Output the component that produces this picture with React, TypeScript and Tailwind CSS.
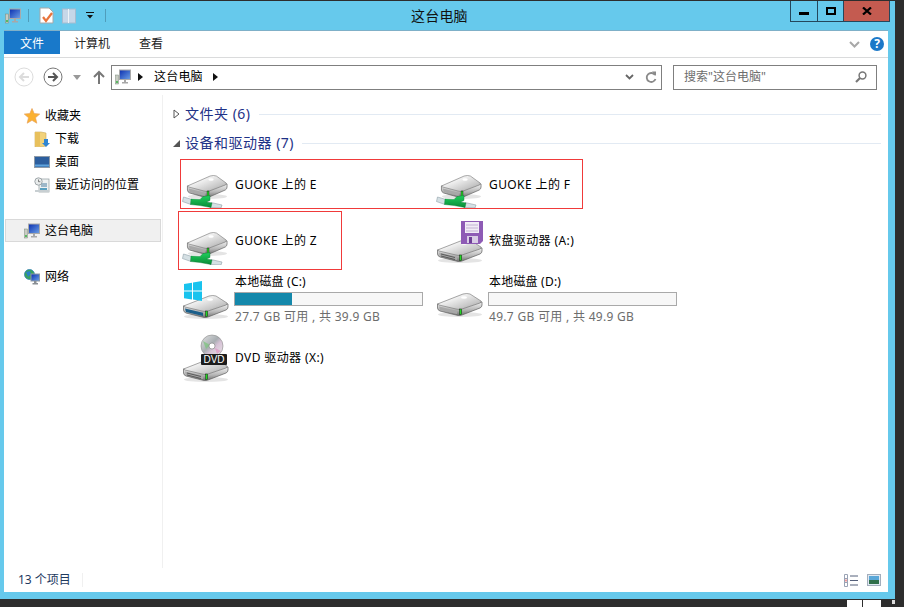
import React from "react";

type DriveProps = { x: number; y: number; front?: string; slots?: boolean };

const Defs = () => (
  <svg width="0" height="0" className="absolute">
    <defs>
      <linearGradient id="topFace" x1="0" y1="0" x2="1" y2="1">
        <stop offset="0" stopColor="#b0b0b0" />
        <stop offset="0.35" stopColor="#f0f0f0" />
        <stop offset="0.7" stopColor="#c8c8c8" />
        <stop offset="1" stopColor="#9a9a9a" />
      </linearGradient>
      <linearGradient id="sideFace" x1="0" y1="0" x2="0" y2="1">
        <stop offset="0" stopColor="#f2f2f2" />
        <stop offset="0.6" stopColor="#b4b4b4" />
        <stop offset="1" stopColor="#707070" />
      </linearGradient>
      <linearGradient id="pipe" x1="0" y1="0" x2="0" y2="1">
        <stop offset="0" stopColor="#1fd05c" />
        <stop offset="1" stopColor="#0a8a38" />
      </linearGradient>
      <linearGradient id="screen" x1="0" y1="0" x2="1" y2="1">
        <stop offset="0" stopColor="#0a2fb0" />
        <stop offset="1" stopColor="#6ea2e6" />
      </linearGradient>
      <linearGradient id="disc" x1="0" y1="0" x2="1" y2="1">
        <stop offset="0" stopColor="#e4e4e4" />
        <stop offset="0.45" stopColor="#a8aeb2" />
        <stop offset="0.6" stopColor="#d7c2d6" />
        <stop offset="1" stopColor="#e9e9e9" />
      </linearGradient>
    </defs>
  </svg>
);

// isometric box shared by every drive icon
const DriveBody = ({ x, y, front = "#a8a8a8", slots }: DriveProps) => (
  <g transform={`translate(${x} ${y})`}>
    <ellipse cx="23" cy="21.5" rx="22" ry="2.5" fill="#d8d8d8" opacity="0.7" />
    <path d="M0.5 11 L0.5 15 Q0.5 17 3 18 L19 22 Q22 23 25 22 L43 15 Q45 14 45 12 L45 9 L22 12 Z" fill="url(#sideFace)" stroke="#5e5e5e" strokeWidth="0.7" />
    <path d="M0.5 11 L26 1 Q30 0 33 1 L44 8 Q45 9 43 10 L25 16 Q22 17 19 16 L2 12 Z" fill="url(#topFace)" stroke="#6e6e6e" strokeWidth="0.6" />
    <path d="M2 13.5 L20 17.8 L20 21 L3 17 Z" fill={front} />
    {slots && <path d="M4 15 L18 18.5 M4 17 L18 20.5" stroke="#444" strokeWidth="0.8" />}
    <ellipse cx="27" cy="4.5" rx="3" ry="1.3" fill="#fff" />
    <rect x="22.5" y="16" width="2.2" height="5.5" fill="#22d822" stroke="#1c1c1c" strokeWidth="0.5" />
  </g>
);

const NetworkDrive = () => (
  <svg width="48" height="48" viewBox="0 0 48 48" className="shrink-0">
    <g transform="translate(5 15) scale(0.89 1)">
      <DriveBody x={0} y={0} />
    </g>
    <path d="M1.5 37 L10 39.5 L9 44.5 L0.5 41.5 Z" fill="#d5e0e4" stroke="#8fa0a8" strokeWidth="0.6" />
    <path d="M29 42.5 L40 45 L39 48 L28 47.5 Z" fill="#d5e0e4" stroke="#8fa0a8" strokeWidth="0.6" />
    <path d="M9 39 L18 39.5 L21 36.5 L28 35.5 L28 40.5 L24.5 42 L30 43 L29 47.5 L18 45.5 L8.5 44.5 Z" fill="url(#pipe)" stroke="#0b7a32" strokeWidth="0.4" />
  </svg>
);

const FloppyDrive = () => (
  <svg width="48" height="48" viewBox="0 0 48 48" className="shrink-0">
    <DriveBody x={1} y={22} slots />
    <path d="M25 4 H47 V24 L44 27 H25 Z" fill="#8e5bb5" />
    <rect x="29" y="5" width="14" height="11" fill="#f1ecf6" />
    <path d="M30 8 H42 M30 11 H42 M30 14 H42" stroke="#b9a5cc" strokeWidth="0.8" />
    <rect x="31" y="19" width="11" height="7" fill="#d9cce6" />
    <rect x="33" y="20" width="3" height="6" fill="#6d3f96" />
  </svg>
);

const SystemDrive = () => (
  <svg width="48" height="48" viewBox="0 0 48 48" className="shrink-0">
    <DriveBody x={1} y={19} front="#1b5f8a" />
    <path d="M2 8 L10 6.8 V14.6 H2 Z M11 6.6 L20 5 V14.6 H11 Z M2 15.6 H10 V23.4 L2 22.2 Z M11 15.6 H20 V25 L11 23.6 Z" fill="#19c3ee" />
  </svg>
);

const LocalDrive = () => (
  <svg width="48" height="48" viewBox="0 0 48 48" className="shrink-0">
    <DriveBody x={1} y={17} />
  </svg>
);

const DvdDrive = () => (
  <svg width="48" height="48" viewBox="0 0 48 48" className="shrink-0">
    <DriveBody x={1} y={24} slots />
    <circle cx="30" cy="12" r="11" fill="url(#disc)" stroke="#8a8a8a" strokeWidth="0.6" />
    <path d="M21 7 L28 11 L24 15 Z" fill="#7ac47a" opacity="0.7" />
    <path d="M33 14 L39 17 L35 20 Z" fill="#e08ac0" opacity="0.6" />
    <circle cx="30" cy="12" r="3" fill="#fff" stroke="#777" strokeWidth="0.6" />
    <rect x="19" y="20" width="26" height="11" rx="1" fill="#1c1c1c" />
    <text x="32" y="29" textAnchor="middle" fontSize="10" fontFamily="Liberation Sans" fill="#fff">DVD</text>
  </svg>
);

const ComputerIcon = () => (
  <svg width="16" height="16" viewBox="0 0 16 16" className="shrink-0">
    <rect x="0.5" y="6" width="3" height="9" fill="#c9ccc4" stroke="#7a8a7a" strokeWidth="0.5" />
    <rect x="1.2" y="12" width="1.6" height="2" fill="#3fb54a" />
    <rect x="4.5" y="1" width="11" height="9.5" fill="url(#screen)" stroke="#a9a9a9" />
    <path d="M9 10.5 H11 V13 H13 V14.5 H7 V13 H9 Z" fill="#a8a8a8" />
  </svg>
);

const StarIcon = () => (
  <svg width="16" height="16" viewBox="0 0 16 16" className="shrink-0">
    <path d="M8 0.5 L10.2 5.6 L15.7 6.1 L11.5 9.7 L12.8 15.2 L8 12.3 L3.2 15.2 L4.5 9.7 L0.3 6.1 L5.8 5.6 Z" fill="#fbb130" stroke="#e8a25c" strokeWidth="0.7" />
  </svg>
);

const DownloadsIcon = () => (
  <svg width="16" height="16" viewBox="0 0 16 16" className="shrink-0">
    <path d="M1 1 H7 L12 2 V15 L7 16 H1 Z" fill="#f2d27a" stroke="#c9a758" strokeWidth="0.6" />
    <path d="M1 1 H6 V15 H1 Z" fill="#e8c05c" />
    <path d="M10 8 H14 V12 H16 L12 16 L8 12 H10 Z" fill="#2f86d4" />
  </svg>
);

const DesktopIcon = () => (
  <svg width="16" height="12" viewBox="0 0 16 12" className="shrink-0">
    <rect x="0.5" y="0.5" width="15" height="11" fill="#2c5e9e" stroke="#8d9aa8" />
    <rect x="1" y="8.5" width="14" height="2" fill="#5ea3dd" />
  </svg>
);

const RecentIcon = () => (
  <svg width="16" height="16" viewBox="0 0 16 16" className="shrink-0">
    <rect x="5" y="2" width="10" height="13" fill="#eef1f2" stroke="#8f9a9f" strokeWidth="0.7" />
    <path d="M7 7 H13 M7 9 H13" stroke="#4d7fa0" />
    <rect x="6" y="11" width="7" height="2" fill="#5aa0c0" />
    <circle cx="4.5" cy="4.5" r="3.7" fill="#e9ecec" stroke="#8c9499" strokeWidth="0.8" />
    <path d="M4.5 2.5 V4.7 H6.3" stroke="#555" strokeWidth="0.7" fill="none" />
    <rect x="1" y="13" width="14" height="2" fill="#c8cfd2" />
  </svg>
);

const NetworkIcon = () => (
  <svg width="16" height="16" viewBox="0 0 16 16" className="shrink-0">
    <circle cx="5.5" cy="5.5" r="5" fill="#3aa35a" stroke="#2d7fb5" strokeWidth="0.8" />
    <path d="M2 3 L6 2 L7 5 L4 8 Z" fill="#2a80c8" />
    <rect x="7" y="5" width="8.5" height="7" fill="url(#screen)" stroke="#8f9aa3" />
    <path d="M10 12 H12.5 V14 H14 V15.5 H8.5 V14 H10 Z" fill="#8a8f94" />
  </svg>
);

const NavRow = ({ icon, label, indent }: { icon: React.ReactNode; label: string; indent?: boolean }) => (
  <div className={indent ? "flex h-[23px] items-center pl-[30px]" : "flex h-[23px] items-center pl-[20px]"}>
    <div className="flex w-[21px] shrink-0 items-center">{icon}</div>
    <span className="text-[12px] text-black">{label}</span>
  </div>
);

const GroupHeader = ({ label, open }: { label: string; open?: boolean }) => (
  <div className="flex h-[24px] items-center pl-[9px] pr-[7px]">
    <svg width="10" height="10" viewBox="0 0 10 10" className="mr-[3px] shrink-0">
      {open ? <path d="M1 9 H8 V2 Z" fill="#555" /> : <path d="M2 1 L7 5 L2 9 Z" fill="#fff" stroke="#555" />}
    </svg>
    <span className="text-[14px] leading-none tracking-[0.5px] text-[#1e3287]">{label}</span>
    <div className="ml-[8px] h-px flex-1 bg-[#e2eaf3]" />
  </div>
);

const Tile = ({ icon, label, first }: { icon: React.ReactNode; label: string; first?: boolean }) => (
  <div className="flex gap-[5px]">
    {icon}
    <span className={first ? "pt-[17px] text-[12px] leading-[16px] tracking-[0.4px] text-black" : "pt-[16px] text-[12px] leading-[16px] tracking-[0.4px] text-black"}>{label}</span>
  </div>
);

const DiskTile = ({ icon, label, percent, detail }: { icon: React.ReactNode; label: string; percent: number; detail: string }) => (
  <div className="flex gap-[4px]">
    <div className="pt-[2px]">{icon}</div>
    <div className="flex w-[189px] flex-col gap-[2px]">
      <span className="pl-px text-[12px] leading-[16px] tracking-[0.2px] text-black">{label}</span>
      <div className="h-[14px] border border-[#a9a9a9] bg-[#f7f7f7]">
        <div className="h-full bg-[#1488ab]" style={{ width: `${percent}%` }} />
      </div>
      <span className="pl-px pt-px text-[12px] leading-[16px] tracking-[0.3px] text-[#6d6d6d]">{detail}</span>
    </div>
  </div>
);

const App: React.FC = () => {
  return (
    <div className="relative h-[607px] w-[904px] overflow-hidden bg-[#2d2d2d] pt-px font-['Noto_Sans','Noto_Sans_CJK_SC',sans-serif]">
      <Defs />
      <div className="flex h-[598px] w-[895px] flex-col bg-[#66c9ec] pb-[7px] pl-[4px] pr-[7px]">
        {/* title bar */}
        <div className="relative flex h-[30px] shrink-0 items-start border-b border-[#7fb0c8]">
          <div className="flex h-[29px] items-center gap-[7px] pl-[1px]">
            <ComputerIcon />
            <div className="h-[13px] w-px bg-[#4f9dbb]" />
            <svg width="16" height="17" viewBox="0 0 16 17" className="ml-[3px]">
              <path d="M1 1 H10 L14 5 V16 H1 Z" fill="#fff" stroke="#a8a8a8" />
              <path d="M4 10 L7 14 L13 6" stroke="#e8743c" strokeWidth="2.2" fill="none" />
            </svg>
            <svg width="14" height="16" viewBox="0 0 14 16">
              <rect x="0.5" y="1" width="13" height="14" fill="#c6d7e8" stroke="#a6bcd0" />
              <rect x="6" y="1" width="1" height="14" fill="#eef3f8" />
            </svg>
            <svg width="8" height="7" viewBox="0 0 8 7" className="ml-[3px]">
              <rect x="0" y="0" width="8" height="1" fill="#111" />
              <path d="M1 3 H7 L4 6.5 Z" fill="#111" />
            </svg>
            <div className="ml-[4px] h-[13px] w-px bg-[#4f9dbb]" />
          </div>
          <span className="absolute left-[407px] top-[6px] text-[14px] leading-[18px] tracking-[0.2px] text-[#111]">这台电脑</span>
          <div className="ml-auto mr-[-2px] flex h-[21px] border border-t-0 border-[#24475c]">
            <div className="flex w-[27px] items-center justify-center border-r border-[#24475c]">
              <div className="mt-[4px] h-[3px] w-[10px] bg-black" />
            </div>
            <div className="flex w-[26px] items-center justify-center border-r border-[#24475c]">
              <div className="h-[8px] w-[10px] border-2 border-black" />
            </div>
            <div className="flex w-[45px] items-center justify-center bg-[#c45b50]">
              <svg width="10" height="8" viewBox="0 0 10 8">
                <path d="M1 0.5 L9 7.5 M9 0.5 L1 7.5" stroke="#000" strokeWidth="2.2" />
              </svg>
            </div>
          </div>
        </div>

        <div className="flex min-h-0 flex-1 flex-col bg-white">
          {/* ribbon tabs */}
          <div className="flex h-[27px] shrink-0 items-start border-b border-[#dadbdc]">
            <div className="flex h-[23px] w-[56px] items-center justify-center bg-[#1979ca] pt-[2px] text-[12px] text-white">文件</div>
            <div className="flex h-[23px] w-[64px] items-center justify-center pt-[2px] text-[12px] text-[#222]">计算机</div>
            <div className="flex h-[23px] w-[54px] items-center justify-center pt-[2px] text-[12px] text-[#222]">查看</div>
            <div className="ml-auto flex h-[23px] items-center gap-[10px] pr-[4px] pt-[3px]">
              <svg width="11" height="7" viewBox="0 0 11 7">
                <path d="M1 1 L5.5 5.5 L10 1" stroke="#a8a8a8" strokeWidth="2" fill="none" />
              </svg>
              <div className="flex h-[14px] w-[14px] items-center justify-center rounded-full bg-[#1b78c8] text-[12px] font-bold leading-none text-white">?</div>
            </div>
          </div>

          {/* address row */}
          <div className="flex h-[37px] shrink-0 items-center pl-[10px] pr-[11px] pt-[1px]">
            <svg width="20" height="20" viewBox="0 0 20 20">
              <circle cx="10" cy="10" r="9" fill="#fff" stroke="#dcdcdc" />
              <path d="M15 10 H6 M10 6 L6 10 L10 14" stroke="#dcdcdc" strokeWidth="2" fill="none" />
            </svg>
            <svg width="20" height="20" viewBox="0 0 20 20" className="ml-[9px]">
              <circle cx="10" cy="10" r="9" fill="#fff" stroke="#777" />
              <path d="M5 10 H14 M10 6 L14 10 L10 14" stroke="#555" strokeWidth="2" fill="none" />
            </svg>
            <svg width="8" height="5" viewBox="0 0 8 5" className="ml-[10px]">
              <path d="M0 0 H8 L4 5 Z" fill="#999" />
            </svg>
            <svg width="12" height="14" viewBox="0 0 12 14" className="ml-[12px]">
              <path d="M6 14 V2 M1 7 L6 2 L11 7" stroke="#777" strokeWidth="2" fill="none" />
            </svg>
            <div className="ml-[6px] flex h-[25px] w-[551px] items-center border border-[#7f7f7f] pl-[3px] pr-[4px]">
              <ComputerIcon />
              <svg width="5" height="8" viewBox="0 0 5 8" className="ml-[7px]"><path d="M0 0 L5 4 L0 8 Z" fill="#111" /></svg>
              <span className="ml-[11px] text-[12px] tracking-[0.2px] text-black">这台电脑</span>
              <svg width="5" height="8" viewBox="0 0 5 8" className="ml-[10px]"><path d="M0 0 L5 4 L0 8 Z" fill="#111" /></svg>
              <svg width="9" height="6" viewBox="0 0 9 6" className="ml-auto"><path d="M1 1 L4.5 4.5 L8 1" stroke="#666" strokeWidth="1.8" fill="none" /></svg>
              <svg width="12" height="13" viewBox="0 0 12 13" className="ml-[11px]">
                <path d="M10 4 A4.5 4.5 0 1 0 10.5 8" stroke="#8a8a8a" strokeWidth="1.8" fill="none" />
                <path d="M7 0.5 L11 0.5 L11 5 Z" fill="#8a8a8a" />
              </svg>
            </div>
            <div className="ml-[11px] flex h-[25px] w-[204px] items-center border border-[#7f7f7f] pl-[10px] pr-[9px]">
              <span className="text-[12px] text-[#6d6d6d]">搜索"这台电脑"</span>
              <svg width="12" height="12" viewBox="0 0 12 12" className="ml-auto">
                <circle cx="7.5" cy="4.5" r="3.4" fill="none" stroke="#777" strokeWidth="1.5" />
                <path d="M5 7 L1 11" stroke="#777" strokeWidth="2.2" />
              </svg>
            </div>
          </div>

          {/* main */}
          <div className="flex min-h-0 flex-1">
            <nav className="w-[159px] shrink-0 border-r border-[#f0f0f0] pt-[9px]">
              <NavRow icon={<StarIcon />} label="收藏夹" />
              <NavRow indent icon={<DownloadsIcon />} label="下载" />
              <NavRow indent icon={<DesktopIcon />} label="桌面" />
              <NavRow indent icon={<RecentIcon />} label="最近访问的位置" />
              <div className="mx-px mt-[23px] flex h-[23px] items-center border border-[#d9d9d9] bg-[#f0f0f0] pl-[18px]">
                <div className="flex w-[21px] shrink-0 items-center"><ComputerIcon /></div>
                <span className="text-[12px] text-black">这台电脑</span>
              </div>
              <div className="mt-[23px]">
                <NavRow icon={<NetworkIcon />} label="网络" />
              </div>
            </nav>

            <div className="min-w-0 flex-1 pt-[7px]">
              <GroupHeader label="文件夹 (6)" />
              <div className="mt-[5px]">
                <GroupHeader open label="设备和驱动器 (7)" />
              </div>
              <div className="ml-[19px] mt-[5px] grid grid-cols-[254px_254px] grid-rows-[57px_57px_60px_46px]">
                <Tile first icon={<NetworkDrive />} label="GUOKE 上的 E" />
                <Tile first icon={<NetworkDrive />} label="GUOKE 上的 F" />
                <Tile icon={<NetworkDrive />} label="GUOKE 上的 Z" />
                <Tile icon={<FloppyDrive />} label="软盘驱动器 (A:)" />
                <DiskTile icon={<SystemDrive />} label="本地磁盘 (C:)" percent={30.5} detail="27.7 GB 可用 , 共 39.9 GB" />
                <DiskTile icon={<LocalDrive />} label="本地磁盘 (D:)" percent={0} detail="49.7 GB 可用 , 共 49.9 GB" />
                <Tile icon={<DvdDrive />} label="DVD 驱动器 (X:)" />
              </div>
            </div>
          </div>

          {/* status bar */}
          <div className="flex h-[24px] shrink-0 items-center pl-[14px] pr-[7px]">
            <span className="w-[64px] text-[12px] text-[#1e3a5f]">13 个项目</span>
            <div className="h-[14px] w-px bg-[#f0f0f0]" />
            <svg width="15" height="13" viewBox="0 0 15 13" className="ml-auto">
              <path d="M0.5 0.5 H3.5 V12.5 H0.5 Z M0.5 4.5 H3.5 M0.5 8.5 H3.5" fill="#fff" stroke="#9aa3b5" />
              <rect x="1.5" y="5.5" width="1" height="2" fill="#d33" />
              <path d="M6 2 H14 M6 6.5 H14 M6 11 H14" stroke="#55607a" />
            </svg>
            <svg width="14" height="12" viewBox="0 0 14 12" className="ml-[8px]">
              <rect x="0.5" y="0.5" width="13" height="11" fill="#dfe8f2" stroke="#a3aebc" />
              <rect x="2" y="2" width="10" height="4" fill="#5aa7d8" />
              <rect x="2" y="6" width="10" height="4" fill="#2f6f4a" />
            </svg>
          </div>
        </div>
      </div>

      {/* taskbar remains under the window */}
      <div className="flex h-[8px] pl-[847px] pt-[1px]">
        <div className="h-full w-[16px] border-r border-[#2d2d2d] bg-white" />
        <div className="h-full w-[18px] bg-white" />
        <div className="ml-[11px] h-[4px] w-[3px] bg-[#ddd]" />
      </div>

      {/* hand-drawn annotation boxes */}
      <div className="absolute left-[180px] top-[159px] h-[50px] w-[403px] border border-[#f03a3a]" />
      <div className="absolute left-[178px] top-[211px] h-[59px] w-[164px] border border-[#f03a3a]" />
    </div>
  );
};

export default App;
